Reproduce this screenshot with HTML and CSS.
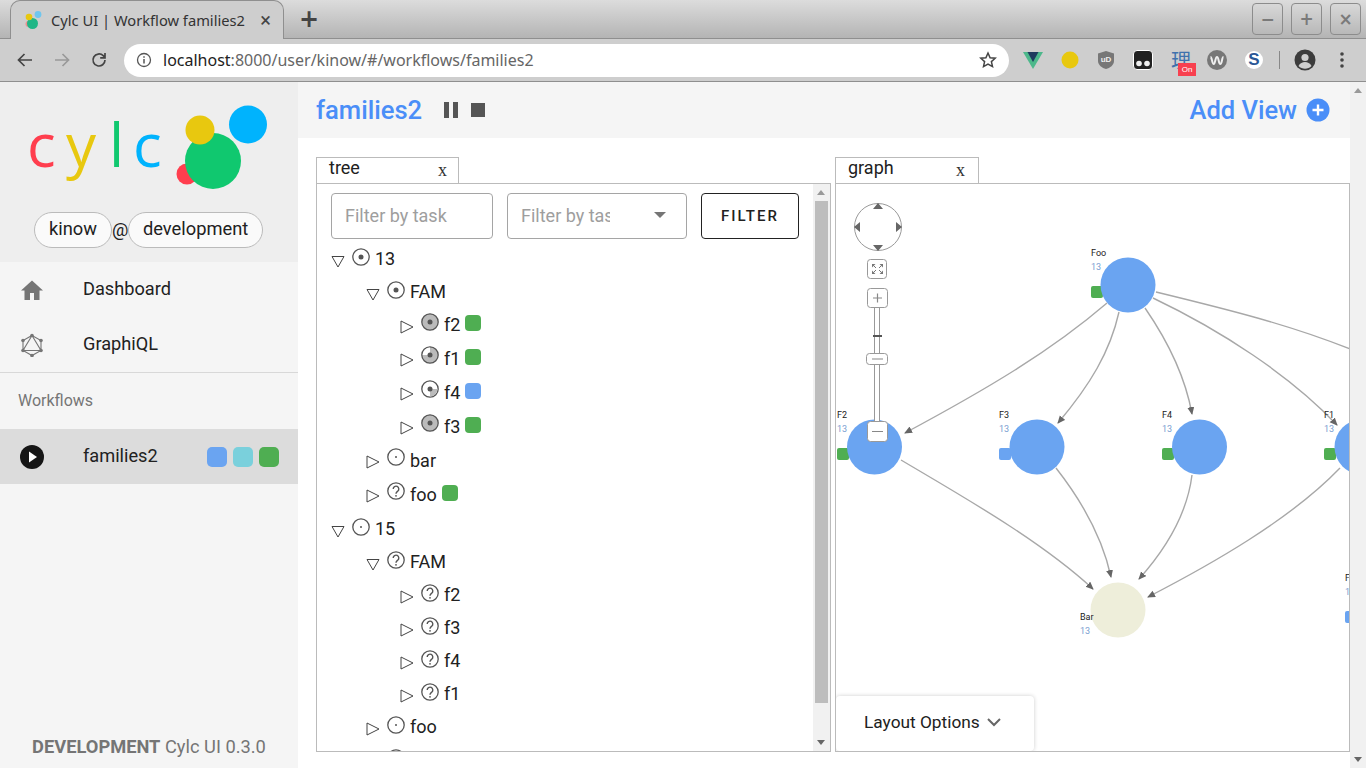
FILE: index.html
```html
<!DOCTYPE html>
<html lang="en">
<head>
    <meta charset="UTF-8">
    <title>Cylc UI | Workflow families2</title>
    <link rel="stylesheet" href="styles.css">
</head>
<body>
    <!-- shared icons -->
    <svg class="defs" width="0" height="0">
        <symbol id="arrow-down" viewBox="0 0 14 14"><path d="M1 2.5h12L7 13z" fill="none" stroke="#444" stroke-width="1"/></symbol>
        <symbol id="arrow-right" viewBox="0 0 14 14"><path d="M1 1v12l12-6z" fill="none" stroke="#444" stroke-width="1"/></symbol>
        <symbol id="job-run" viewBox="0 0 18 18"><circle cx="9" cy="9" r="8.2" fill="#fff" stroke="#555" stroke-width="1.3"/><circle cx="9" cy="9" r="2.5" fill="#555"/></symbol>
        <symbol id="job-wait" viewBox="0 0 18 18"><circle cx="9" cy="9" r="8.2" fill="#fff" stroke="#555" stroke-width="1.3"/><circle cx="9" cy="9" r="1" fill="#555"/></symbol>
        <symbol id="job-full" viewBox="0 0 18 18"><circle cx="9" cy="9" r="8.2" fill="#bbb" stroke="#555" stroke-width="1.3"/><circle cx="9" cy="9" r="2.5" fill="#555"/></symbol>
        <symbol id="job-most" viewBox="0 0 18 18"><circle cx="9" cy="9" r="8.2" fill="#bbb" stroke="#555" stroke-width="1.3"/><path d="M9 9V1.6A7.4 7.4 0 0 0 1.6 9z" fill="#fff"/><circle cx="9" cy="9" r="2.5" fill="#555"/></symbol>
        <symbol id="job-some" viewBox="0 0 18 18"><circle cx="9" cy="9" r="8.2" fill="#fff" stroke="#555" stroke-width="1.3"/><path d="M9 9h7.4A7.4 7.4 0 0 1 9 16.4z" fill="#bbb"/><circle cx="9" cy="9" r="2.5" fill="#555"/></symbol>
        <symbol id="job-unknown" viewBox="0 0 18 18"><circle cx="9" cy="9" r="8.2" fill="#fff" stroke="#555" stroke-width="1.3"/><path d="M6.2 7a2.8 2.8 0 1 1 4.5 2.2c-1 .8-1.7 1.2-1.7 2.6" fill="none" stroke="#555" stroke-width="1.4"/><circle cx="9" cy="13.8" r="0.9" fill="#555"/></symbol>
    </svg>

    <!-- browser window -->
    <div class="tabstrip">
        <div class="tab">
            <svg class="favicon" width="18" height="20" viewBox="0 0 18 20">
                <circle cx="14" cy="4.5" r="3.4" fill="#6fc6ee"/>
                <circle cx="4.5" cy="14" r="3" fill="#ef8f8f"/>
                <circle cx="8.5" cy="13.5" r="5.5" fill="#1fb686"/>
                <circle cx="5" cy="7" r="3.3" fill="#e8c80f"/>
            </svg>
            <span class="tab-title">Cylc UI | Workflow families2</span>
            <span class="tab-close">&#215;</span>
        </div>
        <span class="new-tab">+</span>
        <div class="window-buttons">
            <span class="window-btn">&#8722;</span>
            <span class="window-btn">+</span>
            <span class="window-btn">&#215;</span>
        </div>
    </div>
    <div class="browserbar">
        <div class="nav-icons">
            <svg width="18" height="18" viewBox="0 0 18 18"><path d="M16 9H3M8.5 3L2.5 9l6 6" fill="none" stroke="#444" stroke-width="1.7"/></svg>
            <svg width="18" height="18" viewBox="0 0 18 18"><path d="M2 9h13M9.5 3l6 6-6 6" fill="none" stroke="#999" stroke-width="1.7"/></svg>
            <svg width="18" height="18" viewBox="0 0 18 18"><path d="M15 9a6 6 0 1 1-1.8-4.3L15 6.5M15 2v4.800h-4.800" fill="none" stroke="#444" stroke-width="1.7"/></svg>
        </div>
        <div class="omnibox">
            <svg width="16" height="16" viewBox="0 0 16 16"><circle cx="8" cy="8" r="6.5" fill="none" stroke="#555" stroke-width="1.3"/><path d="M8 7v4.5M8 4.3v1.5" stroke="#555" stroke-width="1.5"/></svg>
            <span class="url"><b>localhost</b>:8000/user/kinow/#/workflows/families2</span>
            <svg class="star" width="18" height="18" viewBox="0 0 18 18"><path d="M9 2l2.1 4.7 5.1.5-3.8 3.4 1.1 5L9 13l-4.5 2.6 1.1-5L1.8 7.200l5.100-.5z" fill="none" stroke="#444" stroke-width="1.5"/></svg>
        </div>
        <div class="extensions">
            <svg width="20" height="18" viewBox="0 0 20 18"><path d="M0 1h20L10 18z" fill="#4db88b"/><path d="M4.5 1h11L10 11z" fill="#1f3a5f"/></svg>
            <svg width="18" height="18" viewBox="0 0 18 18"><circle cx="9" cy="9" r="8.5" fill="#e8c80f"/></svg>
            <svg width="18" height="20" viewBox="0 0 18 20"><path d="M9 1l8 2.5V11c0 4-4 7-8 8-4-1-8-4-8-8V3.5z" fill="#777"/><text x="9" y="12" class="ext-ub">uD</text></svg>
            <svg width="20" height="20" viewBox="0 0 20 20"><rect x="0.5" y="0.5" width="19" height="19" rx="3.5" fill="#222" stroke="#fff"/><circle cx="6" cy="13.5" r="2.8" fill="#eee"/><circle cx="14" cy="13.5" r="2.8" fill="#eee"/></svg>
            <span class="ext-cjk">理<span class="ext-badge">On</span></span>
            <svg width="20" height="20" viewBox="0 0 20 20"><circle cx="10" cy="10" r="10" fill="#777"/><path d="M3.5 7c1.5 0 1.5 7 3.2 7s1.5-7 3.3-7 1.5 7 3.3 7 1.5-7 3.2-7" fill="none" stroke="#eee" stroke-width="2"/></svg>
            <span class="ext-s">S</span>
            <span class="ext-sep"></span>
            <svg width="22" height="22" viewBox="0 0 22 22"><circle cx="11" cy="11" r="10.5" fill="#3c3c3c"/><circle cx="11" cy="8.5" r="3.6" fill="#cecece"/><path d="M4.5 17c1.5-3 4-4 6.5-4s5 1 6.5 4c-3.5 3.5-9.5 3.5-13 0z" fill="#cecece"/></svg>
            <svg class="ext-dots" width="4" height="16" viewBox="0 0 4 16"><circle cx="2" cy="2" r="1.8" fill="#444"/><circle cx="2" cy="8" r="1.8" fill="#444"/><circle cx="2" cy="14" r="1.8" fill="#444"/></svg>
        </div>
    </div>

    <div class="app">
        <!-- sidebar -->
        <aside class="sidebar">
            <div class="sidebar-head">
                <svg class="logo" width="298" height="120" viewBox="0 0 298 120">
                    <text x="27" y="85" class="logo-letter" fill="#ff3e4e">c</text>
                    <text x="66" y="85" class="logo-letter" fill="#e8c80f">y</text>
                    <text x="109" y="85" class="logo-letter" fill="#10c86f">l</text>
                    <text x="133" y="85" class="logo-letter" fill="#00b3fd">c</text>
                    <circle cx="187" cy="92" r="10.5" fill="#ff3e4e"/>
                    <circle cx="248" cy="42.5" r="19" fill="#00b3fd"/>
                    <circle cx="213" cy="79" r="28" fill="#10c86f"/>
                    <circle cx="200" cy="48" r="14.5" fill="#e8c80f"/>
                </svg>
                <div class="user-line">
                    <span class="pill">kinow</span>
                    <span class="at">@</span>
                    <span class="pill">development</span>
                </div>
            </div>
            <nav class="nav">
                <div class="nav-item">
                    <svg class="nav-icon" width="24" height="24" viewBox="0 0 24 24"><path d="M10 22v-7h4v7h5.5v-9.5H23L12 2.5 1 12.5h3.5V22z" fill="#757575"/></svg>
                    <span>Dashboard</span>
                </div>
                <div class="nav-item">
                    <svg class="nav-icon" width="24" height="24" viewBox="0 0 24 24">
                        <path d="M12 2.5l9 5v10l-9 5-9-5v-10zM12 2.5L21 17.5H3z" fill="none" stroke="#757575" stroke-width="1.1"/>
                        <g fill="#757575"><circle cx="12" cy="2.5" r="1.8"/><circle cx="21" cy="7.5" r="1.8"/><circle cx="21" cy="17.5" r="1.8"/><circle cx="12" cy="22.5" r="1.8"/><circle cx="3" cy="17.5" r="1.8"/><circle cx="3" cy="7.5" r="1.8"/></g>
                    </svg>
                    <span>GraphiQL</span>
                </div>
            </nav>
            <div class="nav-title">Workflows</div>
            <div class="nav-item nav-item-active">
                <svg class="nav-icon" width="24" height="24" viewBox="0 0 24 24"><circle cx="12" cy="12" r="12" fill="#161616"/><path d="M9 6.5l8 5.5-8 5.5z" fill="#fff"/></svg>
                <span>families2</span>
                <span class="nav-chips">
                    <i class="chip chip-big chip-blue"></i>
                    <i class="chip chip-big chip-teal"></i>
                    <i class="chip chip-big chip-green"></i>
                </span>
            </div>
            <div class="sidebar-foot"><b>DEVELOPMENT</b> Cylc UI 0.3.0</div>
        </aside>

        <!-- main -->
        <main class="main">
            <div class="toolbar">
                <span class="workflow-name">families2</span>
                <span class="pause"><i></i><i></i></span>
                <span class="stop"></span>
                <span class="add-view">Add View
                    <svg width="24" height="24" viewBox="0 0 24 24"><circle cx="12" cy="12" r="11.5" fill="#4a8ef8"/><path d="M12 6.5v11M6.5 12h11" stroke="#fff" stroke-width="2.4"/></svg>
                </span>
            </div>
            <div class="panels">
                <section class="panel">
                    <div class="panel-tab"><span>tree</span><span class="panel-close">x</span></div>
                    <div class="panel-body tree-body">
                        <div class="tree-content">
                            <div class="filters">
                                <div class="field field-text"><span class="field-label">Filter by task</span></div>
                                <div class="field field-select"><span class="field-label">Filter by task state</span><i class="caret"></i></div>
                                <div class="filter-btn">FILTER</div>
                            </div>
                            <div class="tree">
                                <div class="row depth0"><svg class="tw"><use href="#arrow-down"/></svg><svg class="job"><use href="#job-run"/></svg>13</div>
                                <div class="row depth1"><svg class="tw"><use href="#arrow-down"/></svg><svg class="job"><use href="#job-run"/></svg>FAM</div>
                                <div class="row row-raised depth2"><svg class="tw"><use href="#arrow-right"/></svg><svg class="job"><use href="#job-full"/></svg>f2<i class="chip chip-green"></i></div>
                                <div class="row row-tall row-raised depth2"><svg class="tw"><use href="#arrow-right"/></svg><svg class="job"><use href="#job-most"/></svg>f1<i class="chip chip-green"></i></div>
                                <div class="row row-tall row-raised depth2"><svg class="tw"><use href="#arrow-right"/></svg><svg class="job"><use href="#job-some"/></svg>f4<i class="chip chip-blue"></i></div>
                                <div class="row row-tall row-raised depth2"><svg class="tw"><use href="#arrow-right"/></svg><svg class="job"><use href="#job-full"/></svg>f3<i class="chip chip-green"></i></div>
                                <div class="row row-tall row-raised depth1"><svg class="tw"><use href="#arrow-right"/></svg><svg class="job"><use href="#job-wait"/></svg>bar</div>
                                <div class="row row-tall row-raised depth1"><svg class="tw"><use href="#arrow-right"/></svg><svg class="job"><use href="#job-unknown"/></svg>foo<i class="chip chip-green"></i></div>
                                <div class="row row-next depth0"><svg class="tw"><use href="#arrow-down"/></svg><svg class="job"><use href="#job-wait"/></svg>15</div>
                                <div class="row depth1"><svg class="tw"><use href="#arrow-down"/></svg><svg class="job"><use href="#job-unknown"/></svg>FAM</div>
                                <div class="row depth2"><svg class="tw"><use href="#arrow-right"/></svg><svg class="job"><use href="#job-unknown"/></svg>f2</div>
                                <div class="row depth2"><svg class="tw"><use href="#arrow-right"/></svg><svg class="job"><use href="#job-unknown"/></svg>f3</div>
                                <div class="row depth2"><svg class="tw"><use href="#arrow-right"/></svg><svg class="job"><use href="#job-unknown"/></svg>f4</div>
                                <div class="row depth2"><svg class="tw"><use href="#arrow-right"/></svg><svg class="job"><use href="#job-unknown"/></svg>f1</div>
                                <div class="row depth1"><svg class="tw"><use href="#arrow-right"/></svg><svg class="job"><use href="#job-wait"/></svg>foo</div>
                                <div class="row depth1"><svg class="tw"><use href="#arrow-right"/></svg><svg class="job"><use href="#job-wait"/></svg>bar</div>
                            </div>
                        </div>
                        <div class="scrollbar">
                            <i class="sb-up"></i>
                            <i class="sb-thumb"></i>
                            <i class="sb-down"></i>
                        </div>
                    </div>
                </section>
                <section class="panel panel-graph">
                    <div class="panel-tab"><span>graph</span><span class="panel-close">x</span></div>
                    <div class="panel-body graph-body">
                        <!-- graph canvas, coordinates are page pixels via the viewBox -->
                        <svg class="graph" width="514" height="567" viewBox="836 184 514 567">
                            <defs>
                                <marker id="head" markerWidth="8" markerHeight="8" refX="7" refY="3.5" orient="auto" markerUnits="userSpaceOnUse"><path d="M0 0l8 3.5-8 3.5z" fill="#666"/></marker>
                            </defs>
                            <g class="edges">
                                <path d="M1107 303C1050 352 985 390 905 433" marker-end="url(#head)"/>
                                <path d="M1119 312C1110 352 1090 385 1058 423" marker-end="url(#head)"/>
                                <path d="M1145 308C1165 337 1185 375 1192 414" marker-end="url(#head)"/>
                                <path d="M1153 298C1220 330 1290 375 1337 425" marker-end="url(#head)"/>
                                <path d="M1156 292C1230 310 1290 325 1350 349"/>
                                <path d="M901 460C960 495 1040 540 1093 589" marker-end="url(#head)"/>
                                <path d="M1056 468C1085 505 1103 540 1111 577" marker-end="url(#head)"/>
                                <path d="M1192 475C1187 515 1165 550 1139 579" marker-end="url(#head)"/>
                                <path d="M1340 468C1290 520 1210 565 1148 597" marker-end="url(#head)"/>
                            </g>
                            <g class="node-chips">
                                <rect x="1091" y="286" width="12" height="12" rx="2" fill="#4fae52"/>
                                <rect x="837" y="448" width="12" height="12" rx="2" fill="#4fae52"/>
                                <rect x="999" y="448" width="12" height="12" rx="2" fill="#6aa4f1"/>
                                <rect x="1162" y="448" width="12" height="12" rx="2" fill="#4fae52"/>
                                <rect x="1324" y="448" width="12" height="12" rx="2" fill="#4fae52"/>
                                <rect x="1345" y="611" width="12" height="12" rx="2" fill="#6aa4f1"/>
                            </g>
                            <g fill="#6aa4f1">
                                <circle cx="1128" cy="285" r="27.5"/>
                                <circle cx="874.5" cy="447" r="27.5"/>
                                <circle cx="1037" cy="447" r="27.5"/>
                                <circle cx="1199.5" cy="447" r="27.5"/>
                                <circle cx="1362" cy="447" r="27.5"/>
                            </g>
                            <circle cx="1118" cy="610" r="27.5" fill="#eeeeda"/>
                            <g class="node-name">
                                <text x="1091" y="256">Foo</text>
                                <text x="837" y="418">F2</text>
                                <text x="999" y="418">F3</text>
                                <text x="1162" y="418">F4</text>
                                <text x="1324" y="418">F1</text>
                                <text x="1080" y="620">Bar</text>
                                <text x="1345" y="581">F</text>
                            </g>
                            <g class="node-point">
                                <text x="1091" y="270">13</text>
                                <text x="837" y="432">13</text>
                                <text x="999" y="432">13</text>
                                <text x="1162" y="432">13</text>
                                <text x="1324" y="432">13</text>
                                <text x="1080" y="634">13</text>
                                <text x="1345" y="595">13</text>
                            </g>
                        </svg>
                        <!-- pan and zoom control -->
                        <svg class="panzoom" width="50" height="250" viewBox="0 0 50 250">
                            <circle cx="25" cy="25" r="23.5" fill="#fff" stroke="#999"/>
                            <g fill="#666">
                                <path d="M25 1l5 6H20zM25 49l5-6H20zM1 25l6-5v10zM49 25l-6-5v10z"/>
                            </g>
                            <g class="pz-btn">
                                <rect x="14.5" y="57.5" width="19" height="19" rx="3"/>
                                <rect x="21.5" y="105" width="5" height="115"/>
                                <rect x="14.5" y="86.5" width="20" height="19" rx="3"/>
                                <rect x="13.5" y="151.5" width="21" height="11" rx="3"/>
                                <rect x="14.5" y="219.5" width="20" height="20" rx="3"/>
                            </g>
                            <path d="M24.5 91.5v9M20 96h9M19 157h11M19 229.5h11" stroke="#888" stroke-width="1.2"/>
                            <path d="M20 134h9" stroke="#555" stroke-width="2"/>
                            <!-- fit to screen: four arrows pointing at the corners -->
                            <path d="M19 62h3.5L19 65.5zM30 62v3.5L26.5 62zM19 72v-3.5l3.5 3.5zM30 72h-3.5l3.5-3.5z" fill="#777"/>
                            <path d="M20.5 63.5l2.5 2.5M28.5 63.5L26 66M20.5 70.5L23 68M28.5 70.5L26 68" stroke="#777"/>
                        </svg>
                        <div class="layout-options">
                            <span>Layout Options</span>
                            <svg width="16" height="10" viewBox="0 0 16 10"><path d="M2 2l6 6 6-6" fill="none" stroke="#666" stroke-width="2"/></svg>
                        </div>
                    </div>
                </section>
            </div>
        </main>
        <div class="page-scroll">
            <i class="sb-up"></i>
            <i class="sb-down"></i>
        </div>
    </div>
</body>
</html>
```

FILE: styles.css
```css
* {
    box-sizing: border-box;
}

body {
    margin: 0;
    height: 768px;
    overflow: hidden;
    background-color: #fff;
    font-family: Roboto, "Liberation Sans", sans-serif;
    color: #212121;
}

.defs {
    display: block;
    height: 0;
}

/* browser window */
.tabstrip {
    height: 39px;
    display: flex;
    align-items: flex-end;
    padding-left: 10px;
    background: linear-gradient(#dcdcdc, #b4b4b4);
    border-bottom: 1px solid #8f8f8f;
}

.tab {
    width: 274px;
    height: 39px;
    margin-bottom: -1px;
    display: flex;
    align-items: center;
    padding: 0 12px 0 13px;
    background-color: #cecece;
    border: 1px solid #8f8f8f;
    border-bottom: none;
    border-radius: 10px 10px 0 0;
}

.tab-title {
    margin-left: 9px;
    font-family: "Noto Sans", sans-serif;
    font-size: 14.7px;
    color: #333;
    white-space: nowrap;
}

.tab-close {
    margin-left: auto;
    font-size: 20px;
    color: #444;
}

.new-tab {
    margin: 0 0 4px 15px;
    font-family: "DejaVu Sans", sans-serif;
    font-size: 24px;
    font-weight: bold;
    line-height: 30px;
    color: #444;
}

.window-buttons {
    margin: 0 5px 3px auto;
    display: flex;
    gap: 8px;
}

.window-btn {
    width: 31px;
    height: 32px;
    display: flex;
    align-items: center;
    justify-content: center;
    border: 1px solid #8c8c8c;
    border-radius: 4px;
    font-family: "DejaVu Sans", sans-serif;
    font-size: 17px;
    font-weight: bold;
    color: #7a7a7a;
}

.browserbar {
    height: 43px;
    display: flex;
    align-items: center;
    background-color: #cecece;
    border-bottom: 1px solid #8f8f8f;
}

.nav-icons {
    width: 124px;
    display: flex;
    gap: 19px;
    padding-left: 16px;
}

.omnibox {
    width: 885px;
    height: 33px;
    display: flex;
    align-items: center;
    padding: 0 12px;
    background-color: #fff;
    border-radius: 17px;
}

.url {
    margin-left: 11px;
    font-family: "Noto Sans", sans-serif;
    font-size: 16px;
    color: #666;
}

.url b {
    font-weight: normal;
    color: #222;
}

.star {
    margin-left: auto;
}

.extensions {
    flex: 1;
    display: flex;
    align-items: center;
    padding-left: 14px;
}

.extensions > svg,
.extensions > span {
    margin-right: 18px;
}

.ext-ub {
    font-family: "Liberation Sans", sans-serif;
    font-size: 8px;
    font-weight: bold;
    text-anchor: middle;
    fill: #eee;
}

.extensions > .ext-cjk {
    position: relative;
    width: 20px;
    margin-right: 16px;
    font-family: "Noto Sans CJK SC", sans-serif;
    font-size: 20px;
    line-height: 22px;
    color: #3f72ad;
}

.ext-badge {
    position: absolute;
    left: 7px;
    top: 14px;
    width: 18px;
    height: 13px;
    background-color: #f8404f;
    font-family: "Liberation Sans", sans-serif;
    font-size: 8px;
    line-height: 13px;
    text-align: center;
    color: #fff;
}

.extensions > .ext-s {
    width: 18px;
    height: 18px;
    margin-right: 16px;
    background-color: #fff;
    border-radius: 50%;
    font-family: "Liberation Sans", sans-serif;
    font-size: 17px;
    font-weight: bold;
    line-height: 18px;
    text-align: center;
    color: #2a5796;
}

.extensions > .ext-sep {
    width: 1px;
    height: 18px;
    margin-right: 14px;
    background-color: #888;
}

.extensions > svg.ext-dots {
    margin: 0 0 0 6px;
}

.app {
    height: 686px;
    display: flex;
}

/* sidebar */
.sidebar {
    width: 298px;
    display: flex;
    flex-direction: column;
    background-color: #f5f5f5;
}

.sidebar-head {
    height: 180px;
    background-color: #eee;
}

.logo {
    display: block;
}

.logo-letter {
    font-family: "Open Sans", sans-serif;
    font-size: 60px;
}

.user-line {
    display: flex;
    align-items: center;
    padding-left: 34px;
    margin-top: 10px;
    font-size: 18.3px;
}

.pill {
    height: 36px;
    padding: 0 14px 3px;
    display: flex;
    align-items: center;
    background-color: #fafafa;
    border: 1px solid #bbb;
    border-radius: 18px;
}

.at {
    width: 16px;
    padding-bottom: 2px;
    text-align: center;
}

.nav {
    border-bottom: 1px solid #d8d8d8;
}

.nav-item {
    height: 55px;
    display: flex;
    align-items: center;
    padding: 0 0 2px 20px;
    font-size: 18.2px;
}

.nav-icon {
    margin: 2px 39px 0 0;
}

.nav-title {
    height: 56px;
    padding: 18px 0 0 18px;
    font-size: 16px;
    color: #757575;
}

.nav-item-active {
    background-color: #dcdcdc;
}

.nav-chips {
    margin: 2px 0 0 auto;
    display: flex;
    gap: 6px;
    padding-right: 19px;
}

.chip {
    display: block;
    width: 16px;
    height: 16px;
    border-radius: 4px;
}

.chip-big {
    width: 20px;
    height: 20px;
    border-radius: 5px;
}

.chip-blue {
    background-color: #6aa4f1;
}

.chip-teal {
    background-color: #7ad0dc;
}

.chip-green {
    background-color: #4fae52;
}

.sidebar-foot {
    margin-top: auto;
    height: 32px;
    font-size: 18.3px;
    text-align: center;
    color: #757575;
}

/* main */
.main {
    flex: 1;
    display: flex;
    flex-direction: column;
}

.toolbar {
    height: 56px;
    display: flex;
    align-items: center;
    padding: 0 20px 0 18px;
    background-color: #f5f5f5;
}

.workflow-name {
    font-size: 25.6px;
    font-weight: 500;
    color: #4a8ef8;
}

.pause {
    margin-left: 22px;
    display: flex;
    gap: 4px;
}

.pause i {
    display: block;
    width: 5px;
    height: 16px;
    background-color: #555;
}

.stop {
    margin-left: 13px;
    width: 14px;
    height: 14px;
    background-color: #555;
}

.add-view {
    margin-left: auto;
    display: flex;
    align-items: center;
    gap: 9px;
    font-size: 25.5px;
    font-weight: 500;
    color: #4a8ef8;
}

.panels {
    display: flex;
    gap: 4px;
    padding: 19px 0 0 18px;
}

.panel {
    width: 515px;
}

.panel-tab {
    width: 143px;
    height: 27px;
    display: flex;
    justify-content: space-between;
    padding: 0 11px 0 12px;
    margin-bottom: -1px;
    border: 1px solid #bbb;
    border-bottom: none;
    font-size: 18px;
    line-height: 19px;
}

.panel-graph .panel-tab {
    width: 144px;
    padding-right: 13px;
}

.panel-close {
    font-family: "Liberation Serif", serif;
    line-height: 24px;
    color: #333;
}

.panel-body {
    position: relative;
    height: 569px;
    border: 1px solid #bbb;
    overflow: hidden;
}

.tree-body {
    display: flex;
}

.tree-content {
    flex: 1;
    overflow: hidden;
}

.filters {
    display: flex;
    padding: 9px 0 0 14px;
    gap: 14px;
}

.field {
    height: 46px;
    display: flex;
    align-items: center;
    padding: 0 0 2px 13px;
    border: 1px solid #a5a5a5;
    border-radius: 4px;
    font-size: 18px;
    color: #9e9e9e;
}

.field-label {
    overflow: hidden;
    white-space: nowrap;
}

.field-text {
    width: 162px;
}

.field-text .field-label {
    width: 104px;
}

.field-select {
    width: 180px;
}

.field-select .field-label {
    width: 89px;
}

.caret {
    margin-left: 44px;
    border-left: 6px solid transparent;
    border-right: 6px solid transparent;
    border-top: 6px solid #757575;
}

.filter-btn {
    width: 98px;
    height: 46px;
    display: flex;
    align-items: center;
    justify-content: center;
    padding-bottom: 1px;
    border: 1px solid #222;
    border-radius: 4px;
    font-size: 15px;
    font-weight: 500;
    letter-spacing: 2px;
}

.tree {
    padding-top: 3px;
}

.row {
    height: 33px;
    display: flex;
    align-items: center;
    font-size: 18px;
    white-space: nowrap;
}

.row-tall {
    height: 34px;
}

.row-next {
    margin-top: 1px;
}

.depth0 {
    padding-left: 14px;
}

.depth1 {
    padding-left: 49px;
}

.depth2 {
    padding-left: 83px;
}

.tw {
    width: 14px;
    height: 14px;
    margin: 4px 7px 0 0;
}

.job {
    width: 18px;
    height: 18px;
    margin: 0 5px 4px 0;
}

.row-raised .job {
    margin-bottom: 6px;
}

.row .chip {
    margin: 0 0 3px 5px;
}

.scrollbar {
    width: 17px;
    position: relative;
    background-color: #f1f1f1;
}

.sb-thumb {
    position: absolute;
    left: 2px;
    top: 17px;
    width: 13px;
    height: 502px;
    background-color: #bdbdbd;
}

.sb-up,
.sb-down {
    position: absolute;
    left: 4px;
    border-left: 4px solid transparent;
    border-right: 4px solid transparent;
}

.sb-up {
    top: 6px;
    border-bottom: 5px solid #999;
}

.sb-down {
    bottom: 6px;
    border-top: 5px solid #666;
}

/* graph */
.graph {
    display: block;
}

.edges path {
    fill: none;
    stroke: #a8a8a8;
    stroke-width: 1.4;
}

.node-name {
    font-size: 9px;
    fill: #222;
}

.node-point {
    font-size: 9px;
    fill: #7a9ed0;
}

.panzoom {
    position: absolute;
    left: 17px;
    top: 18px;
}

.pz-btn rect {
    fill: #fff;
    stroke: #999;
}

.layout-options {
    position: absolute;
    left: 0;
    bottom: 0;
    width: 198px;
    height: 55px;
    display: flex;
    align-items: center;
    gap: 6px;
    padding: 0 0 3px 28px;
    background-color: #fff;
    border-radius: 4px;
    box-shadow: 0 0 4px rgba(0, 0, 0, 0.2);
    font-size: 17.3px;
}

.page-scroll {
    position: relative;
    width: 16px;
    background-color: #f1f1f1;
}
```
